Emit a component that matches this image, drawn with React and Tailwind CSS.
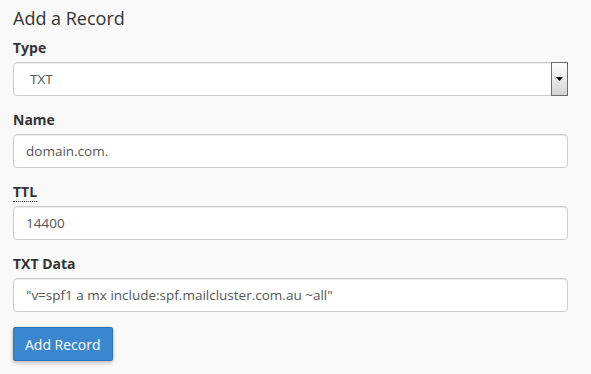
export default function App() {
  const fields = [
    { label: "Name", value: "domain.com." },
    { label: "TTL", value: "14400", abbr: true },
    { label: "TXT Data", value: '"v=spf1 a mx include:spf.mailcluster.com.au ~all"' },
  ];

  return (
    <div
      className="w-[591px] h-[374px] bg-[#f9f9f9] text-[#333] pl-[13px] pr-[23px] pt-[8px]"
      style={{ fontFamily: '"Open Sans", "Noto Sans", sans-serif' }}
    >
      {/* Heading */}
      <h4 className="text-[18px] leading-[20px] font-normal mb-[10px]">Add a Record</h4>

      {/* Type */}
      <div className="mb-[14px]">
        <label className="block text-[14px] leading-[20px] font-bold mb-[4px]">Type</label>
        <div className="flex h-[34px] items-stretch bg-white border border-[#ccc] rounded-[4px] shadow-[inset_0_1px_1px_rgba(0,0,0,0.075)]">
          <div className="flex-1 flex items-center pl-[16px] text-[13.5px] text-[#555]">TXT</div>
          <div className="-my-px -mr-px w-[17px] flex items-center justify-center border border-[#6b6b6b] bg-gradient-to-b from-white to-[#d4d4d4]">
            <svg width="7" height="4" viewBox="0 0 7 4">
              <path d="M0 0h7L3.5 4z" fill="#000" />
            </svg>
          </div>
        </div>
      </div>

      {fields.map((f) => (
        <div key={f.label} className="mb-[14px]">
          <label className="block text-[14px] leading-[20px] font-bold mb-[4px]">
            {f.abbr ? (
              <abbr className="no-underline border-b border-dotted border-[#333] cursor-help">{f.label}</abbr>
            ) : (
              f.label
            )}
          </label>
          <div className="flex h-[34px] items-center bg-white border border-[#ccc] rounded-[4px] px-[12px] text-[13.5px] text-[#555] shadow-[inset_0_1px_1px_rgba(0,0,0,0.075)]">
            {f.value}
          </div>
        </div>
      ))}

      <button className="mt-[1px] h-[34px] px-[11px] bg-[#3a87d0] border border-[#2e70b0] rounded-[2px] text-white text-[14px] shadow-[0_2px_4px_rgba(0,0,0,0.25)]">
        Add Record
      </button>
    </div>
  );
}
